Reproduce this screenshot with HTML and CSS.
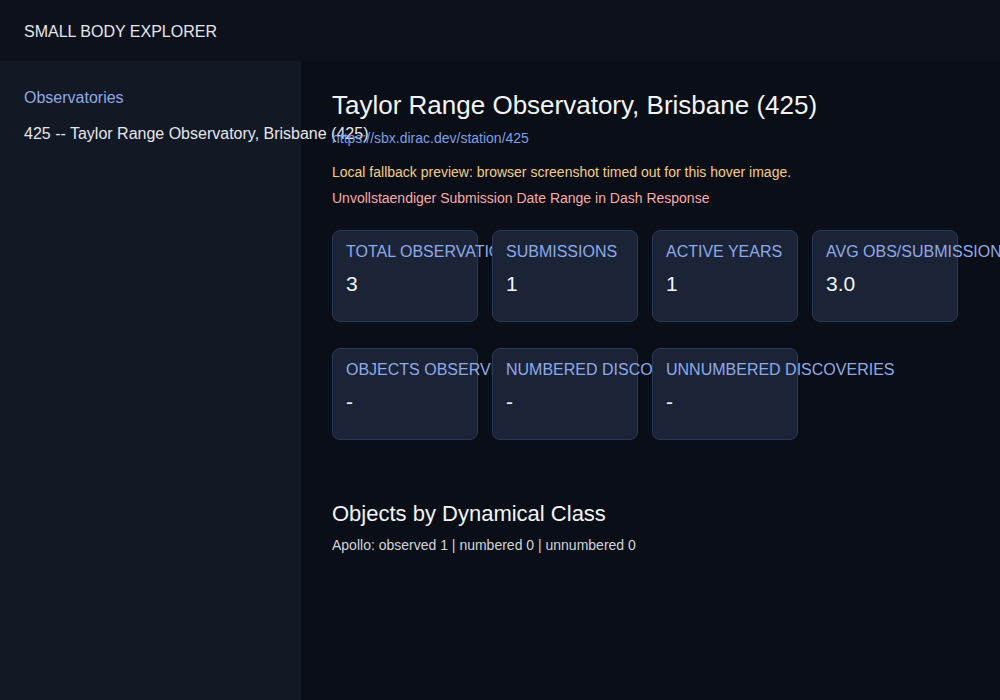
FILE: index.html
```html
<!DOCTYPE html>
<html lang="en">
<head>
    <meta charset="UTF-8">
    <meta name="viewport" content="width=device-width, initial-scale=1.0">
    <title>Small Body Explorer - Station 425</title>
    <link rel="stylesheet" href="styles.css">
</head>
<body>
    <header class="topbar">SMALL BODY EXPLORER</header>

    <div class="layout">
        <aside class="sidebar">
            <div class="sidebar-title">Observatories</div>
            <div class="sidebar-item">425 -- Taylor Range Observatory, Brisbane (425)</div>
        </aside>

        <main class="content">
            <h1 class="station-title">Taylor Range Observatory, Brisbane (425)</h1>
            <a class="station-link" href="https://sbx.dirac.dev/station/425">https://sbx.dirac.dev/station/425</a>
            <p class="note note-warn">Local fallback preview: browser screenshot timed out for this hover image.</p>
            <p class="note note-error">Unvollstaendiger Submission Date Range in Dash Response</p>

            <div class="stat-row">
                <div class="stat-card">
                    <div class="stat-label">TOTAL OBSERVATIONS</div>
                    <div class="stat-value">3</div>
                </div>
                <div class="stat-card">
                    <div class="stat-label">SUBMISSIONS</div>
                    <div class="stat-value">1</div>
                </div>
                <div class="stat-card">
                    <div class="stat-label">ACTIVE YEARS</div>
                    <div class="stat-value">1</div>
                </div>
                <div class="stat-card">
                    <div class="stat-label">AVG OBS/SUBMISSION</div>
                    <div class="stat-value">3.0</div>
                </div>
            </div>

            <div class="stat-row">
                <div class="stat-card">
                    <div class="stat-label">OBJECTS OBSERVED</div>
                    <div class="stat-value">-</div>
                </div>
                <div class="stat-card">
                    <div class="stat-label">NUMBERED DISCOVERIES</div>
                    <div class="stat-value">-</div>
                </div>
                <div class="stat-card">
                    <div class="stat-label">UNNUMBERED DISCOVERIES</div>
                    <div class="stat-value">-</div>
                </div>
            </div>

            <h2 class="section-title">Objects by Dynamical Class</h2>
            <p class="class-line">Apollo: observed 1 | numbered 0 | unnumbered 0</p>
        </main>
    </div>
</body>
</html>
```

FILE: styles.css
```css
* {
    margin: 0;
    padding: 0;
    box-sizing: border-box;
}

html,
body {
    height: 100%;
}

body {
    font-family: "Liberation Sans", Arial, sans-serif;
    background: #0a0e16;
    color: #e5e7eb;
    display: flex;
    flex-direction: column;
}

.topbar {
    height: 61px;
    flex-shrink: 0;
    display: flex;
    align-items: center;
    padding: 2px 24px 0;
    background: #0c111b;
    color: #e5e7eb;
    font-size: 16px;
}

.layout {
    flex: 1;
    display: flex;
}

.sidebar {
    width: 301px;
    flex-shrink: 0;
    background: #121824;
    padding: 28px 24px;
}

.sidebar-title {
    color: #8fa9ea;
    font-size: 16px;
    margin-bottom: 18px;
}

.sidebar-item {
    color: #e5e7eb;
    font-size: 16px;
    white-space: nowrap;
}

.content {
    flex: 1;
    padding: 29px 31px;
}

.station-title {
    font-size: 26px;
    font-weight: normal;
    color: #f3f4f6;
    margin-bottom: 9px;
}

.station-link {
    display: block;
    color: #7d9fe6;
    font-size: 14px;
    text-decoration: none;
    margin-bottom: 18px;
}

.note {
    font-size: 14px;
    margin-bottom: 10px;
}

.note-warn {
    color: #f5cd85;
}

.note-error {
    color: #f8aaaa;
    margin-bottom: 24px;
}

.stat-row {
    display: flex;
    gap: 14px;
    margin-bottom: 26px;
}

.stat-card {
    width: 146px;
    height: 92px;
    background: #1b2436;
    border: 1px solid #26395a;
    border-radius: 8px;
    padding: 12px 13px;
}

.stat-label {
    color: #8fa9ea;
    font-size: 16px;
    white-space: nowrap;
    margin-bottom: 11px;
}

.stat-value {
    color: #f3f4f6;
    font-size: 21px;
}

.section-title {
    font-size: 22px;
    font-weight: normal;
    color: #f3f4f6;
    margin-top: 61px;
    margin-bottom: 10px;
}

.class-line {
    font-size: 14px;
    color: #d1d5db;
}
```
